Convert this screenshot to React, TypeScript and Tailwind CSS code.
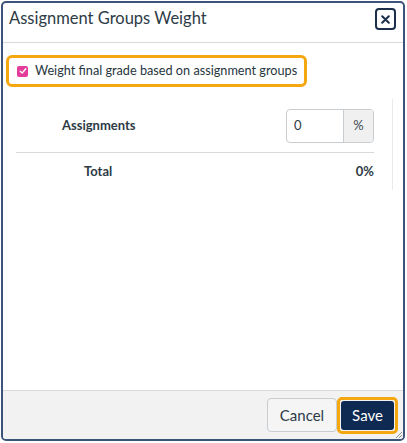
export default function App() {
  return (
    <div className="w-[407px] h-[443px] bg-white p-px font-['Lato',sans-serif] text-[#2d3b45]">
      <div className="relative flex flex-col h-[440px] w-[404px] border-2 border-[#3c5479] rounded-[5px] overflow-hidden bg-white">
        {/* header */}
        <div className="flex items-start justify-between h-[40px] pt-[4px] pl-[6px] pr-[7px] border-b border-[#d7dadd] shrink-0">
          <h2 className="text-[16.5px] leading-[22px] font-normal text-[#2d3b45]">Assignment Groups Weight</h2>
          <button className="mt-px w-[21px] h-[22px] border-2 border-[#1b2f4d] rounded-[4px] flex items-center justify-center text-[#1b2f4d]">
            <svg width="9" height="9" viewBox="0 0 9 9">
              <path d="M1.2 1.2 L7.8 7.8 M7.8 1.2 L1.2 7.8" stroke="currentColor" strokeWidth="2" strokeLinecap="round" />
            </svg>
          </button>
        </div>

        {/* body */}
        <div className="flex-1 pt-[12px] pl-[3px]">
          <div className="inline-flex items-center gap-[7px] h-[32px] pl-[8px] pr-[7px] border-[3px] border-[#f5a70f] rounded-[6px]">
            <span className="w-[11px] h-[11px] rounded-[2px] bg-[#e43c9a] flex items-center justify-center">
              <svg width="8" height="8" viewBox="0 0 8 8">
                <path d="M1.2 4.2 L3.2 6 L6.8 1.8" stroke="white" strokeWidth="1.4" fill="none" strokeLinecap="round" strokeLinejoin="round" />
              </svg>
            </span>
            <span className="text-[12.7px] text-[#273540]">Weight final grade based on assignment groups</span>
          </div>

          <div className="flex mt-[12px] mr-[10px]">
            <div className="flex-1 pl-[10px] pr-[18px]">
              <div className="flex items-center justify-between h-[54px] border-b border-[#d7dadd]">
                <span className="pl-[46px] text-[13px] font-bold">Assignments</span>
                <div className="flex h-[34px] w-[88px] border border-[#c7cdd1] rounded-[4px] overflow-hidden">
                  <span className="flex-1 flex items-center pl-[7px] text-[13px]">0</span>
                  <span className="w-[30px] flex items-center justify-center bg-[#f0f0f0] border-l border-[#c7cdd1] text-[13px] text-[#3d4a54]">%</span>
                </div>
              </div>
              <div className="flex items-center justify-between h-[38px]">
                <span className="pl-[68px] text-[13px] font-bold">Total</span>
                <span className="text-[13px] font-bold">0%</span>
              </div>
            </div>
            <div className="w-px h-[91px] bg-[#e8eaec]" />
          </div>
        </div>

        {/* footer */}
        <div className="flex items-center justify-end h-[49px] bg-[#f2f2f2] border-t border-[#d7dadd] pr-[5px] shrink-0">
          <button className="h-[34px] w-[70px] bg-[#f5f5f5] border border-[#c7cdd1] rounded-[4px] text-[15px] text-[#2d3b45]">Cancel</button>
          <span className="flex border-[3px] border-[#f5a70f] rounded-[5px] p-px">
            <button className="h-[29px] w-[53px] bg-[#0e2a52] rounded-[3px] text-[15px] text-white">Save</button>
          </span>
        </div>
        <svg className="absolute right-0 bottom-0" width="9" height="9" viewBox="0 0 9 9">
          <path d="M8 2 L2 8 M8 5 L5 8" stroke="#8a8f94" strokeWidth="1" />
        </svg>
      </div>
    </div>
  );
}
